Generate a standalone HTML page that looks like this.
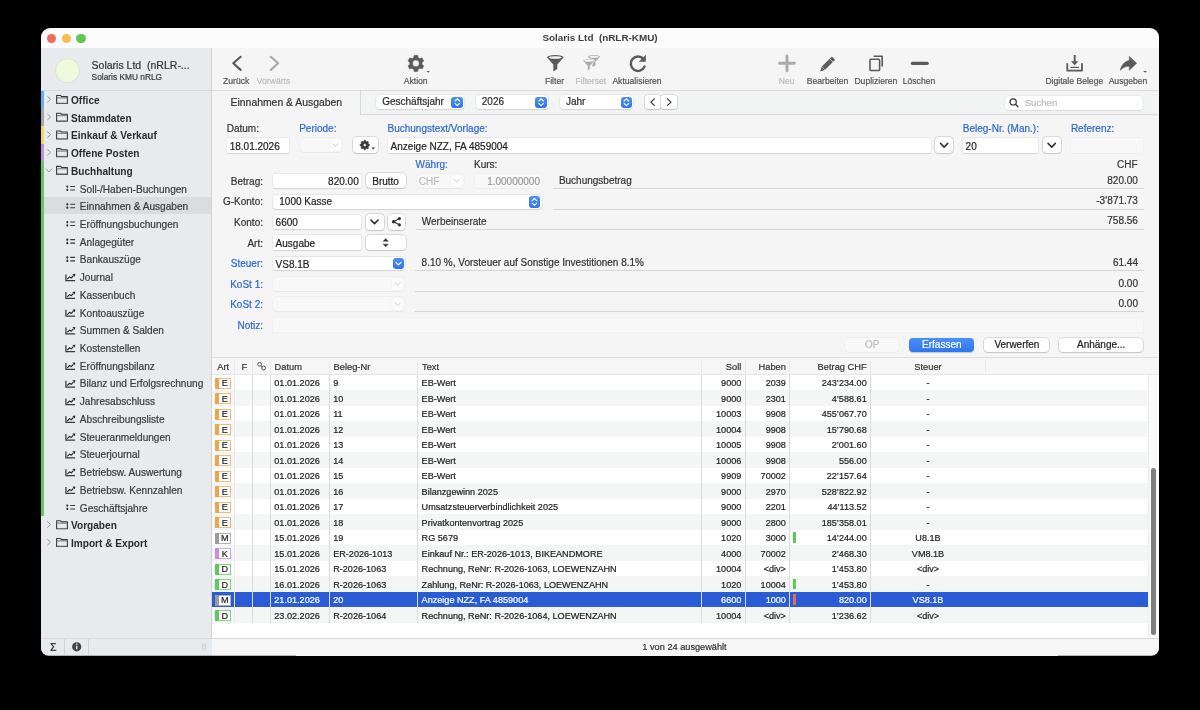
<!DOCTYPE html>
<html><head><meta charset="utf-8"><style>
*{box-sizing:border-box;margin:0;padding:0}
html,body{width:1200px;height:710px;background:#000;overflow:hidden}
body{font-family:"Liberation Sans",sans-serif;color:#2a2a2a;position:relative}
#win{position:absolute;left:0;top:0;width:1200px;height:710px;will-change:transform;clip-path:inset(28px 41px 54.3px 41px round 9px 9px 7.5px 7.5px);background:#f5f5f5}
.a{position:absolute;white-space:pre;-webkit-text-stroke:0.2px currentColor}
.b{position:absolute}
svg.i{position:absolute;left:0;top:0;overflow:visible}
</style></head><body><div id="win">
<div class="b" style="left:41.00px;top:28.00px;width:1118.00px;height:20.00px;background:#fcfcfc"></div>
<div class="b" style="left:41.00px;top:47.80px;width:1118.00px;height:0.80px;background:#e6e6e6"></div>
<div class="a" style="top:32.13px;font-size:9.9px;line-height:11.88px;color:#3d3d3d;font-weight:bold;-webkit-text-stroke:0;left:300.00px;width:600px;text-align:center;">Solaris Ltd  (nRLR-KMU)</div>
<div class="b" style="left:46.70px;top:33.60px;width:9.60px;height:9.60px;background:#ee6a5f;border-radius:50%"></div>
<div class="b" style="left:61.50px;top:33.60px;width:9.60px;height:9.60px;background:#f5bf4f;border-radius:50%"></div>
<div class="b" style="left:76.20px;top:33.60px;width:9.60px;height:9.60px;background:#62c554;border-radius:50%"></div>
<div class="b" style="left:41.00px;top:48.00px;width:170.50px;height:608.00px;background:#e8ebee"></div>
<div class="b" style="left:41.00px;top:89.60px;width:170.50px;height:1.00px;background:#d5d8db"></div>
<div class="b" style="left:211.00px;top:48.00px;width:1.00px;height:607.00px;background:#d3d3d3"></div>
<div class="b" style="left:56.40px;top:58.50px;width:23.00px;height:23.00px;background:#eefadc;border-radius:50%;box-shadow:0 0 0 0.8px #d8dfcf"></div>
<div class="a" style="top:58.66px;font-size:10.5px;line-height:12.60px;color:#333;left:91.60px;">Solaris Ltd  (nRLR-...</div>
<div class="a" style="top:71.90px;font-size:8.35px;line-height:10.02px;color:#3a3a3a;left:91.60px;">Solaris KMU nRLG</div>
<div class="b" style="left:44.00px;top:197.22px;width:167.00px;height:16.92px;background:#dadcdf"></div>
<div class="b" style="left:41.00px;top:90.50px;width:3.00px;height:17.72px;background:#5eb2f4"></div>
<div class="b" style="left:41.00px;top:108.22px;width:3.00px;height:17.72px;background:#a6a6a6"></div>
<div class="b" style="left:41.00px;top:125.94px;width:3.00px;height:17.72px;background:#f6d75c"></div>
<div class="b" style="left:41.00px;top:143.66px;width:3.00px;height:17.72px;background:#c48fe2"></div>
<div class="b" style="left:41.00px;top:161.38px;width:3.00px;height:354.40px;background:#60cb5c"></div>
<div class="a" style="top:94.94px;font-size:10.1px;line-height:12.12px;color:#2b2b2b;font-weight:bold;-webkit-text-stroke:0;left:71.00px;">Office</div>
<div class="a" style="top:112.66px;font-size:10.1px;line-height:12.12px;color:#2b2b2b;font-weight:bold;-webkit-text-stroke:0;left:71.00px;">Stammdaten</div>
<div class="a" style="top:130.38px;font-size:10.1px;line-height:12.12px;color:#2b2b2b;font-weight:bold;-webkit-text-stroke:0;left:71.00px;">Einkauf &amp; Verkauf</div>
<div class="a" style="top:148.10px;font-size:10.1px;line-height:12.12px;color:#2b2b2b;font-weight:bold;-webkit-text-stroke:0;left:71.00px;">Offene Posten</div>
<div class="a" style="top:165.82px;font-size:10.1px;line-height:12.12px;color:#2b2b2b;font-weight:bold;-webkit-text-stroke:0;left:71.00px;">Buchhaltung</div>
<div class="a" style="top:183.54px;font-size:10.1px;line-height:12.12px;color:#3a3a3a;left:79.80px;">Soll-/Haben-Buchungen</div>
<div class="a" style="top:201.26px;font-size:10.1px;line-height:12.12px;color:#3a3a3a;left:79.80px;">Einnahmen &amp; Ausgaben</div>
<div class="a" style="top:218.98px;font-size:10.1px;line-height:12.12px;color:#3a3a3a;left:79.80px;">Eröffnungsbuchungen</div>
<div class="a" style="top:236.70px;font-size:10.1px;line-height:12.12px;color:#3a3a3a;left:79.80px;">Anlagegüter</div>
<div class="a" style="top:254.42px;font-size:10.1px;line-height:12.12px;color:#3a3a3a;left:79.80px;">Bankauszüge</div>
<div class="a" style="top:272.14px;font-size:10.1px;line-height:12.12px;color:#3a3a3a;left:79.80px;">Journal</div>
<div class="a" style="top:289.86px;font-size:10.1px;line-height:12.12px;color:#3a3a3a;left:79.80px;">Kassenbuch</div>
<div class="a" style="top:307.58px;font-size:10.1px;line-height:12.12px;color:#3a3a3a;left:79.80px;">Kontoauszüge</div>
<div class="a" style="top:325.30px;font-size:10.1px;line-height:12.12px;color:#3a3a3a;left:79.80px;">Summen &amp; Salden</div>
<div class="a" style="top:343.02px;font-size:10.1px;line-height:12.12px;color:#3a3a3a;left:79.80px;">Kostenstellen</div>
<div class="a" style="top:360.74px;font-size:10.1px;line-height:12.12px;color:#3a3a3a;left:79.80px;">Eröffnungsbilanz</div>
<div class="a" style="top:378.46px;font-size:10.1px;line-height:12.12px;color:#3a3a3a;left:79.80px;">Bilanz und Erfolgsrechnung</div>
<div class="a" style="top:396.18px;font-size:10.1px;line-height:12.12px;color:#3a3a3a;left:79.80px;">Jahresabschluss</div>
<div class="a" style="top:413.90px;font-size:10.1px;line-height:12.12px;color:#3a3a3a;left:79.80px;">Abschreibungsliste</div>
<div class="a" style="top:431.62px;font-size:10.1px;line-height:12.12px;color:#3a3a3a;left:79.80px;">Steueranmeldungen</div>
<div class="a" style="top:449.34px;font-size:10.1px;line-height:12.12px;color:#3a3a3a;left:79.80px;">Steuerjournal</div>
<div class="a" style="top:467.06px;font-size:10.1px;line-height:12.12px;color:#3a3a3a;left:79.80px;">Betriebsw. Auswertung</div>
<div class="a" style="top:484.78px;font-size:10.1px;line-height:12.12px;color:#3a3a3a;left:79.80px;">Betriebsw. Kennzahlen</div>
<div class="a" style="top:502.50px;font-size:10.1px;line-height:12.12px;color:#3a3a3a;left:79.80px;">Geschäftsjahre</div>
<div class="a" style="top:520.22px;font-size:10.1px;line-height:12.12px;color:#2b2b2b;font-weight:bold;-webkit-text-stroke:0;left:71.00px;">Vorgaben</div>
<div class="a" style="top:537.94px;font-size:10.1px;line-height:12.12px;color:#2b2b2b;font-weight:bold;-webkit-text-stroke:0;left:71.00px;">Import &amp; Export</div>
<svg class="i" width="1200" height="710"><g transform="translate(56,94.90)"><path d="M0.6,8.6V0.6H4.6L5.6,1.7H11.4V8.6Z" fill="none" stroke="#3a3a3a" stroke-width="1.1" stroke-linejoin="round"/><path d="M0.8,3.0H11.2" stroke="#7a7a7a" stroke-width="1.1"/><path d="M0.8,8.3H11.2" stroke="#777" stroke-width="0.8"/></g><path d="M47.6,96.40L50.6,99.20L47.6,102.00" fill="none" stroke="#9a9a9a" stroke-width="1" stroke-linecap="round" stroke-linejoin="round"/><g transform="translate(56,112.62)"><path d="M0.6,8.6V0.6H4.6L5.6,1.7H11.4V8.6Z" fill="none" stroke="#3a3a3a" stroke-width="1.1" stroke-linejoin="round"/><path d="M0.8,3.0H11.2" stroke="#7a7a7a" stroke-width="1.1"/><path d="M0.8,8.3H11.2" stroke="#777" stroke-width="0.8"/></g><path d="M47.6,114.12L50.6,116.92L47.6,119.72" fill="none" stroke="#9a9a9a" stroke-width="1" stroke-linecap="round" stroke-linejoin="round"/><g transform="translate(56,130.34)"><path d="M0.6,8.6V0.6H4.6L5.6,1.7H11.4V8.6Z" fill="none" stroke="#3a3a3a" stroke-width="1.1" stroke-linejoin="round"/><path d="M0.8,3.0H11.2" stroke="#7a7a7a" stroke-width="1.1"/><path d="M0.8,8.3H11.2" stroke="#777" stroke-width="0.8"/></g><path d="M47.6,131.84L50.6,134.64L47.6,137.44" fill="none" stroke="#9a9a9a" stroke-width="1" stroke-linecap="round" stroke-linejoin="round"/><g transform="translate(56,148.06)"><path d="M0.6,8.6V0.6H4.6L5.6,1.7H11.4V8.6Z" fill="none" stroke="#3a3a3a" stroke-width="1.1" stroke-linejoin="round"/><path d="M0.8,3.0H11.2" stroke="#7a7a7a" stroke-width="1.1"/><path d="M0.8,8.3H11.2" stroke="#777" stroke-width="0.8"/></g><path d="M47.6,149.56L50.6,152.36L47.6,155.16" fill="none" stroke="#9a9a9a" stroke-width="1" stroke-linecap="round" stroke-linejoin="round"/><g transform="translate(56,165.78)"><path d="M0.6,8.6V0.6H4.6L5.6,1.7H11.4V8.6Z" fill="none" stroke="#3a3a3a" stroke-width="1.1" stroke-linejoin="round"/><path d="M0.8,3.0H11.2" stroke="#7a7a7a" stroke-width="1.1"/><path d="M0.8,8.3H11.2" stroke="#777" stroke-width="0.8"/></g><path d="M46.2,168.98L49,171.98L51.8,168.98" fill="none" stroke="#9a9a9a" stroke-width="1" stroke-linecap="round" stroke-linejoin="round"/><g fill="#222"><circle cx="67.3" cy="186.50" r="1.05"/><circle cx="67.3" cy="190.00" r="1.05"/></g><path d="M67.3,186.50V190.00" stroke="#555" stroke-width="0.5"/><path d="M70.2,186.50H75.1M70.2,190.00H75.1" stroke="#3a3a3a" stroke-width="1.1"/><g fill="#222"><circle cx="67.3" cy="204.22" r="1.05"/><circle cx="67.3" cy="207.72" r="1.05"/></g><path d="M67.3,204.22V207.72" stroke="#555" stroke-width="0.5"/><path d="M70.2,204.22H75.1M70.2,207.72H75.1" stroke="#3a3a3a" stroke-width="1.1"/><g fill="#222"><circle cx="67.3" cy="221.94" r="1.05"/><circle cx="67.3" cy="225.44" r="1.05"/></g><path d="M67.3,221.94V225.44" stroke="#555" stroke-width="0.5"/><path d="M70.2,221.94H75.1M70.2,225.44H75.1" stroke="#3a3a3a" stroke-width="1.1"/><g fill="#222"><circle cx="67.3" cy="239.66" r="1.05"/><circle cx="67.3" cy="243.16" r="1.05"/></g><path d="M67.3,239.66V243.16" stroke="#555" stroke-width="0.5"/><path d="M70.2,239.66H75.1M70.2,243.16H75.1" stroke="#3a3a3a" stroke-width="1.1"/><g fill="#222"><circle cx="67.3" cy="257.38" r="1.05"/><circle cx="67.3" cy="260.88" r="1.05"/></g><path d="M67.3,257.38V260.88" stroke="#555" stroke-width="0.5"/><path d="M70.2,257.38H75.1M70.2,260.88H75.1" stroke="#3a3a3a" stroke-width="1.1"/><path d="M65.9,274.40V280.70H75.1" fill="none" stroke="#3a3a3a" stroke-width="1.25"/><path d="M67.2,279.20L69.6,276.90L71.3,278.00L73.4,275.70" fill="none" stroke="#2a2a2a" stroke-width="1.15" stroke-linejoin="round"/><path d="M72.4,274.20L75.3,273.80L74.9,276.70Z" fill="#222"/><path d="M65.9,292.12V298.42H75.1" fill="none" stroke="#3a3a3a" stroke-width="1.25"/><path d="M67.2,296.92L69.6,294.62L71.3,295.72L73.4,293.42" fill="none" stroke="#2a2a2a" stroke-width="1.15" stroke-linejoin="round"/><path d="M72.4,291.92L75.3,291.52L74.9,294.42Z" fill="#222"/><path d="M65.9,309.84V316.14H75.1" fill="none" stroke="#3a3a3a" stroke-width="1.25"/><path d="M67.2,314.64L69.6,312.34L71.3,313.44L73.4,311.14" fill="none" stroke="#2a2a2a" stroke-width="1.15" stroke-linejoin="round"/><path d="M72.4,309.64L75.3,309.24L74.9,312.14Z" fill="#222"/><path d="M65.9,327.56V333.86H75.1" fill="none" stroke="#3a3a3a" stroke-width="1.25"/><path d="M67.2,332.36L69.6,330.06L71.3,331.16L73.4,328.86" fill="none" stroke="#2a2a2a" stroke-width="1.15" stroke-linejoin="round"/><path d="M72.4,327.36L75.3,326.96L74.9,329.86Z" fill="#222"/><path d="M65.9,345.28V351.58H75.1" fill="none" stroke="#3a3a3a" stroke-width="1.25"/><path d="M67.2,350.08L69.6,347.78L71.3,348.88L73.4,346.58" fill="none" stroke="#2a2a2a" stroke-width="1.15" stroke-linejoin="round"/><path d="M72.4,345.08L75.3,344.68L74.9,347.58Z" fill="#222"/><path d="M65.9,363.00V369.30H75.1" fill="none" stroke="#3a3a3a" stroke-width="1.25"/><path d="M67.2,367.80L69.6,365.50L71.3,366.60L73.4,364.30" fill="none" stroke="#2a2a2a" stroke-width="1.15" stroke-linejoin="round"/><path d="M72.4,362.80L75.3,362.40L74.9,365.30Z" fill="#222"/><path d="M65.9,380.72V387.02H75.1" fill="none" stroke="#3a3a3a" stroke-width="1.25"/><path d="M67.2,385.52L69.6,383.22L71.3,384.32L73.4,382.02" fill="none" stroke="#2a2a2a" stroke-width="1.15" stroke-linejoin="round"/><path d="M72.4,380.52L75.3,380.12L74.9,383.02Z" fill="#222"/><path d="M65.9,398.44V404.74H75.1" fill="none" stroke="#3a3a3a" stroke-width="1.25"/><path d="M67.2,403.24L69.6,400.94L71.3,402.04L73.4,399.74" fill="none" stroke="#2a2a2a" stroke-width="1.15" stroke-linejoin="round"/><path d="M72.4,398.24L75.3,397.84L74.9,400.74Z" fill="#222"/><path d="M65.9,416.16V422.46H75.1" fill="none" stroke="#3a3a3a" stroke-width="1.25"/><path d="M67.2,420.96L69.6,418.66L71.3,419.76L73.4,417.46" fill="none" stroke="#2a2a2a" stroke-width="1.15" stroke-linejoin="round"/><path d="M72.4,415.96L75.3,415.56L74.9,418.46Z" fill="#222"/><path d="M65.9,433.88V440.18H75.1" fill="none" stroke="#3a3a3a" stroke-width="1.25"/><path d="M67.2,438.68L69.6,436.38L71.3,437.48L73.4,435.18" fill="none" stroke="#2a2a2a" stroke-width="1.15" stroke-linejoin="round"/><path d="M72.4,433.68L75.3,433.28L74.9,436.18Z" fill="#222"/><path d="M65.9,451.60V457.90H75.1" fill="none" stroke="#3a3a3a" stroke-width="1.25"/><path d="M67.2,456.40L69.6,454.10L71.3,455.20L73.4,452.90" fill="none" stroke="#2a2a2a" stroke-width="1.15" stroke-linejoin="round"/><path d="M72.4,451.40L75.3,451.00L74.9,453.90Z" fill="#222"/><path d="M65.9,469.32V475.62H75.1" fill="none" stroke="#3a3a3a" stroke-width="1.25"/><path d="M67.2,474.12L69.6,471.82L71.3,472.92L73.4,470.62" fill="none" stroke="#2a2a2a" stroke-width="1.15" stroke-linejoin="round"/><path d="M72.4,469.12L75.3,468.72L74.9,471.62Z" fill="#222"/><path d="M65.9,487.04V493.34H75.1" fill="none" stroke="#3a3a3a" stroke-width="1.25"/><path d="M67.2,491.84L69.6,489.54L71.3,490.64L73.4,488.34" fill="none" stroke="#2a2a2a" stroke-width="1.15" stroke-linejoin="round"/><path d="M72.4,486.84L75.3,486.44L74.9,489.34Z" fill="#222"/><g fill="#222"><circle cx="67.3" cy="505.46" r="1.05"/><circle cx="67.3" cy="508.96" r="1.05"/></g><path d="M67.3,505.46V508.96" stroke="#555" stroke-width="0.5"/><path d="M70.2,505.46H75.1M70.2,508.96H75.1" stroke="#3a3a3a" stroke-width="1.1"/><g transform="translate(56,520.18)"><path d="M0.6,8.6V0.6H4.6L5.6,1.7H11.4V8.6Z" fill="none" stroke="#3a3a3a" stroke-width="1.1" stroke-linejoin="round"/><path d="M0.8,3.0H11.2" stroke="#7a7a7a" stroke-width="1.1"/><path d="M0.8,8.3H11.2" stroke="#777" stroke-width="0.8"/></g><path d="M47.6,521.68L50.6,524.48L47.6,527.28" fill="none" stroke="#9a9a9a" stroke-width="1" stroke-linecap="round" stroke-linejoin="round"/><g transform="translate(56,537.90)"><path d="M0.6,8.6V0.6H4.6L5.6,1.7H11.4V8.6Z" fill="none" stroke="#3a3a3a" stroke-width="1.1" stroke-linejoin="round"/><path d="M0.8,3.0H11.2" stroke="#7a7a7a" stroke-width="1.1"/><path d="M0.8,8.3H11.2" stroke="#777" stroke-width="0.8"/></g><path d="M47.6,539.40L50.6,542.20L47.6,545.00" fill="none" stroke="#9a9a9a" stroke-width="1" stroke-linecap="round" stroke-linejoin="round"/></svg>
<div class="b" style="left:41.00px;top:638.00px;width:170.50px;height:18.00px;background:#e8ebee"></div>
<div class="b" style="left:41.00px;top:638.00px;width:170.50px;height:1.00px;background:#d6d8da"></div>
<div class="b" style="left:64.20px;top:639.00px;width:0.80px;height:16.00px;background:#d0d2d4"></div>
<div class="b" style="left:88.00px;top:639.00px;width:0.80px;height:16.00px;background:#d0d2d4"></div>
<div class="a" style="top:640.89px;font-size:11px;line-height:13.20px;color:#444;font-weight:bold;-webkit-text-stroke:0;left:-246.80px;width:600px;text-align:center;">Σ</div>
<svg class="i" width="1200" height="710"><circle cx="76.7" cy="646.8" r="4.6" fill="#444"/><rect x="76" y="645.6" width="1.4" height="3.6" fill="#e8ebee"/><circle cx="76.7" cy="644.0" r="0.8" fill="#e8ebee"/><path d="M202.6,643.5V650.5M204.1,643.5V650.5M205.6,643.5V650.5" stroke="#c4c6c8" stroke-width="0.6"/></svg>
<div class="b" style="left:212.00px;top:48.00px;width:947.00px;height:42.00px;background:#f5f5f5"></div>
<div class="b" style="left:212.00px;top:89.60px;width:947.00px;height:1.00px;background:#dcdcdc"></div>
<svg class="i" width="1200" height="710"><path d="M240.6,56.8L233.3,63.3L240.6,69.9" fill="none" stroke="#5a5a5a" stroke-width="2.2" stroke-linecap="round" stroke-linejoin="round"/><path d="M270.8,56.8L278.1,63.3L270.8,69.9" fill="none" stroke="#ababab" stroke-width="2.2" stroke-linecap="round" stroke-linejoin="round"/><path d="M413.56,57.66L414.11,55.29L417.69,55.29L418.24,57.66A6.2,6.2 0 0 1 419.70,58.50L419.70,58.50L422.03,57.80L423.81,60.89L422.04,62.56A6.2,6.2 0 0 1 422.04,64.24L422.04,64.24L423.81,65.91L422.03,69.00L419.70,68.30A6.2,6.2 0 0 1 418.24,69.14L418.24,69.14L417.69,71.51L414.11,71.51L413.56,69.14A6.2,6.2 0 0 1 412.10,68.30L412.10,68.30L409.77,69.00L407.99,65.91L409.76,64.24A6.2,6.2 0 0 1 409.76,62.56L409.76,62.56L407.99,60.89L409.77,57.80L412.10,58.50A6.2,6.2 0 0 1 413.56,57.66ZM419.20,63.40A3.3,3.3 0 1 0 412.60,63.40A3.3,3.3 0 1 0 419.20,63.40Z" fill="#5a5a5a" fill-rule="evenodd" stroke="#5a5a5a" stroke-width="0.5" stroke-linejoin="round"/><path d="M426.6,70.9H429.9L428.25,72.7Z" fill="#5a5a5a"/><g transform="translate(547,55)"><path d="M0,2.6A8.3,2.6 0 0 1 16.6,2.6L10.3,9.4V14.1L6.3,16.6V9.4Z" fill="#5a5a5a"/><ellipse cx="8.3" cy="2.5" rx="6.5" ry="1.35" fill="#f5f5f5"/></g><g transform="translate(588,55) scale(0.72)"><path d="M0,2.6A8.3,2.6 0 0 1 16.6,2.6L10.3,9.4V14.1L6.3,16.6V9.4Z" fill="#ababab"/><ellipse cx="8.3" cy="2.5" rx="6.3" ry="1.4" fill="#f5f5f5"/></g><g transform="translate(582.8,59) scale(0.72)"><path d="M0,2.6A8.3,2.6 0 0 1 16.6,2.6L10.3,9.4V14.1L6.3,16.6V9.4Z" fill="#ababab" stroke="#f5f5f5" stroke-width="1.2"/><ellipse cx="8.3" cy="2.5" rx="6.3" ry="1.4" fill="#f5f5f5"/></g><path d="M643.6,59.2A7.2,7.2 0 1 0 644.6,66.6" fill="none" stroke="#5a5a5a" stroke-width="2.4" stroke-linecap="round"/><path d="M645.8,54.8V61.8H638.8Z" fill="#5a5a5a"/><path d="M779.6,63.3H794.4M787,55.9V70.7" stroke="#ababab" stroke-width="2.9" stroke-linecap="round"/><g transform="rotate(-45 828 63.6)"><rect x="821.6" y="61.3" width="14.2" height="4.6" rx="0.7" fill="#5a5a5a"/><path d="M821.4,61.3L816.9,63.6L821.4,65.9Z" fill="#5a5a5a"/><path d="M832.6,61.1V66.1" stroke="#f5f5f5" stroke-width="0.7"/></g><rect x="870" y="59.3" width="9.6" height="11.2" rx="0.8" fill="none" stroke="#5a5a5a" stroke-width="1.6"/><path d="M873.6,56.2H882.2V66.6" fill="none" stroke="#5a5a5a" stroke-width="1.6" stroke-linejoin="round"/><path d="M912.4,63.3H927.2" stroke="#5a5a5a" stroke-width="3.2" stroke-linecap="round"/><path d="M1067.3,63.2V70.6H1082V63.2" fill="none" stroke="#5a5a5a" stroke-width="1.8" stroke-linejoin="round"/><path d="M1070.4,67.4H1078.9" stroke="#5a5a5a" stroke-width="1.2"/><path d="M1074.7,55V61.8" stroke="#5a5a5a" stroke-width="1.9"/><path d="M1071,61.3H1078.4L1074.7,65.2Z" fill="#5a5a5a"/><path d="M1120.2,70.4C1121.6,65 1124.6,61.2 1129.3,60.6V56.3L1136.7,63.2L1129.3,70.3V66.2C1125.6,66.2 1122.6,67.8 1120.2,70.4Z" fill="#5a5a5a" stroke="#5a5a5a" stroke-width="0.5" stroke-linejoin="round"/><path d="M1143.2,70.9H1147L1145.1,72.8Z" fill="#5a5a5a"/></svg>
<div class="a" style="top:76.26px;font-size:8.6px;line-height:10.32px;color:#555;left:-63.80px;width:600px;text-align:center;">Zurück</div>
<div class="a" style="top:76.26px;font-size:8.6px;line-height:10.32px;color:#bcbcbc;left:-26.50px;width:600px;text-align:center;">Vorwärts</div>
<div class="a" style="top:76.26px;font-size:8.6px;line-height:10.32px;color:#555;left:115.70px;width:600px;text-align:center;">Aktion</div>
<div class="a" style="top:76.26px;font-size:8.6px;line-height:10.32px;color:#555;left:254.50px;width:600px;text-align:center;">Filter</div>
<div class="a" style="top:76.26px;font-size:8.6px;line-height:10.32px;color:#bcbcbc;left:290.90px;width:600px;text-align:center;">Filterset</div>
<div class="a" style="top:76.26px;font-size:8.6px;line-height:10.32px;color:#555;left:337.00px;width:600px;text-align:center;">Aktualisieren</div>
<div class="a" style="top:76.26px;font-size:8.6px;line-height:10.32px;color:#bcbcbc;left:486.60px;width:600px;text-align:center;">Neu</div>
<div class="a" style="top:76.26px;font-size:8.6px;line-height:10.32px;color:#555;left:527.60px;width:600px;text-align:center;">Bearbeiten</div>
<div class="a" style="top:76.26px;font-size:8.6px;line-height:10.32px;color:#555;left:575.90px;width:600px;text-align:center;">Duplizieren</div>
<div class="a" style="top:76.26px;font-size:8.6px;line-height:10.32px;color:#555;left:619.00px;width:600px;text-align:center;">Löschen</div>
<div class="a" style="top:76.26px;font-size:8.6px;line-height:10.32px;color:#555;left:774.30px;width:600px;text-align:center;">Digitale Belege</div>
<div class="a" style="top:76.26px;font-size:8.6px;line-height:10.32px;color:#555;left:828.00px;width:600px;text-align:center;">Ausgeben</div>
<div class="b" style="left:212.00px;top:90.60px;width:947.00px;height:23.40px;background:#f5f5f5"></div>
<div class="b" style="left:361.00px;top:90.60px;width:798.00px;height:23.00px;background:#f3f4f4"></div>
<div class="b" style="left:360.00px;top:90.60px;width:1.00px;height:23.90px;background:#d9d9d9"></div>
<div class="b" style="left:360.00px;top:113.60px;width:799.00px;height:1.00px;background:#d9d9d9"></div>
<div class="a" style="top:96.66px;font-size:10.4px;line-height:12.48px;color:#333;left:230.60px;">Einnahmen &amp; Ausgaben</div>
<div class="b" style="left:376.00px;top:95.00px;width:88.30px;height:14.30px;background:#fff;border-radius:4px;box-shadow:0 0 0 0.5px #dcdcdc,0 0.7px 1px rgba(0,0,0,0.16)"></div>
<div class="b" style="left:451.40px;top:96.50px;width:11.80px;height:11.40px;background:linear-gradient(#4d90f7,#2f74ee);border-radius:3px"></div>
<div class="a" style="top:96.03px;font-size:10px;line-height:12.00px;color:#2a2a2a;left:382.20px;">Geschäftsjahr</div>
<div class="b" style="left:476.00px;top:95.00px;width:72.10px;height:14.30px;background:#fff;border-radius:4px;box-shadow:0 0 0 0.5px #dcdcdc,0 0.7px 1px rgba(0,0,0,0.16)"></div>
<div class="b" style="left:535.20px;top:96.50px;width:11.80px;height:11.40px;background:linear-gradient(#4d90f7,#2f74ee);border-radius:3px"></div>
<div class="a" style="top:96.03px;font-size:10px;line-height:12.00px;color:#2a2a2a;left:481.80px;">2026</div>
<div class="b" style="left:559.70px;top:95.00px;width:73.70px;height:14.30px;background:#fff;border-radius:4px;box-shadow:0 0 0 0.5px #dcdcdc,0 0.7px 1px rgba(0,0,0,0.16)"></div>
<div class="b" style="left:620.50px;top:96.50px;width:11.80px;height:11.40px;background:linear-gradient(#4d90f7,#2f74ee);border-radius:3px"></div>
<div class="a" style="top:96.03px;font-size:10px;line-height:12.00px;color:#2a2a2a;left:566.00px;">Jahr</div>
<div class="b" style="left:644.70px;top:95.00px;width:15.90px;height:14.30px;background:#fff;border-radius:3px;box-shadow:0 0 0 0.6px #c4c4c4,0 0.7px 0.9px rgba(0,0,0,0.18)"></div>
<div class="b" style="left:661.20px;top:95.00px;width:16.10px;height:14.30px;background:#fff;border-radius:3px;box-shadow:0 0 0 0.6px #c4c4c4,0 0.7px 0.9px rgba(0,0,0,0.18)"></div>
<div class="b" style="left:1004.80px;top:95.50px;width:138.40px;height:14.70px;background:#fff;border-radius:4px;box-shadow:0 0 0 0.5px #e2e2e2,0 0.6px 0.9px rgba(0,0,0,0.12)"></div>
<div class="a" style="top:97.11px;font-size:9.6px;line-height:11.52px;color:#b9b9b9;left:1024.70px;">Suchen</div>
<div class="a" style="top:123.23px;font-size:10px;line-height:12.00px;color:#333;left:226.70px;">Datum:</div>
<div class="a" style="top:123.23px;font-size:10px;line-height:12.00px;color:#2c68d9;left:299.20px;">Periode:</div>
<div class="a" style="top:123.23px;font-size:10px;line-height:12.00px;color:#2c68d9;left:387.50px;">Buchungstext/Vorlage:</div>
<div class="a" style="top:123.23px;font-size:10px;line-height:12.00px;color:#2c68d9;left:962.80px;">Beleg-Nr. (Man.):</div>
<div class="a" style="top:123.23px;font-size:10px;line-height:12.00px;color:#2c68d9;left:1070.90px;">Referenz:</div>
<div class="b" style="left:226.90px;top:137.80px;width:62.30px;height:14.80px;background:#fff;border-radius:1.5px;box-shadow:0 0 0 0.5px #e0e0e0,0 0.6px 0.8px rgba(0,0,0,0.16)"></div>
<div class="a" style="top:140.73px;font-size:10px;line-height:12.00px;color:#222;left:229.70px;">18.01.2026</div>
<div class="b" style="left:299.60px;top:138.30px;width:42.70px;height:13.70px;background:#f8f8f8;border-radius:4px;box-shadow:0 0 0 0.5px #ececec,0 0.6px 0.8px rgba(0,0,0,0.07)"></div>
<div class="b" style="left:329.90px;top:139.30px;width:11.00px;height:11.70px;background:#fbfbfb;border-radius:3px;box-shadow:0 0 0 0.5px #efefef"></div>
<div class="b" style="left:352.80px;top:137.40px;width:25.10px;height:15.60px;background:#fff;border-radius:4px;box-shadow:0 0 0 0.6px #c4c4c4,0 0.7px 0.9px rgba(0,0,0,0.18)"></div>
<div class="b" style="left:388.00px;top:137.80px;width:542.90px;height:14.80px;background:#fff;border-radius:1.5px;box-shadow:0 0 0 0.5px #e0e0e0,0 0.6px 0.8px rgba(0,0,0,0.16)"></div>
<div class="a" style="top:140.73px;font-size:10px;line-height:12.00px;color:#222;left:390.60px;">Anzeige NZZ, FA 4859004</div>
<div class="b" style="left:934.80px;top:137.40px;width:18.70px;height:15.60px;background:#fff;border-radius:3.5px;box-shadow:0 0 0 0.6px #c4c4c4,0 0.7px 0.9px rgba(0,0,0,0.18)"></div>
<div class="b" style="left:962.80px;top:137.80px;width:75.40px;height:14.80px;background:#fff;border-radius:1.5px;box-shadow:0 0 0 0.5px #e0e0e0,0 0.6px 0.8px rgba(0,0,0,0.16)"></div>
<div class="a" style="top:140.73px;font-size:10px;line-height:12.00px;color:#222;left:965.60px;">20</div>
<div class="b" style="left:1042.60px;top:137.40px;width:18.20px;height:15.60px;background:#fff;border-radius:3.5px;box-shadow:0 0 0 0.6px #c4c4c4,0 0.7px 0.9px rgba(0,0,0,0.18)"></div>
<div class="b" style="left:1070.90px;top:138.00px;width:72.30px;height:14.60px;background:#f8f8f8;border-radius:2px;box-shadow:0 0 0 0.5px #ebebeb,0 0.5px 0.6px rgba(0,0,0,0.06)"></div>
<div class="a" style="top:159.03px;font-size:10px;line-height:12.00px;color:#2c68d9;left:415.60px;">Währg:</div>
<div class="a" style="top:159.03px;font-size:10px;line-height:12.00px;color:#333;left:474.00px;">Kurs:</div>
<div class="a" style="top:158.94px;font-size:10px;line-height:12.00px;color:#333;right:62.40px;text-align:right;">CHF</div>
<div class="a" style="top:176.03px;font-size:10px;line-height:12.00px;color:#333;right:937.00px;text-align:right;">Betrag:</div>
<div class="b" style="left:272.70px;top:174.00px;width:88.30px;height:14.20px;background:#fff;border-radius:1.5px;box-shadow:0 0 0 0.5px #e0e0e0,0 0.6px 0.8px rgba(0,0,0,0.16)"></div>
<div class="a" style="top:176.03px;font-size:10px;line-height:12.00px;color:#222;right:841.30px;text-align:right;">820.00</div>
<div class="b" style="left:365.50px;top:172.60px;width:40.30px;height:15.90px;background:#fff;border-radius:4px;box-shadow:0 0 0 0.6px #c4c4c4,0 0.7px 0.9px rgba(0,0,0,0.18)"></div>
<div class="a" style="top:175.53px;font-size:10px;line-height:12.00px;color:#222;left:85.60px;width:600px;text-align:center;">Brutto</div>
<div class="b" style="left:416.50px;top:173.50px;width:47.00px;height:14.10px;background:#f8f8f8;border-radius:4px;box-shadow:0 0 0 0.5px #ececec,0 0.6px 0.8px rgba(0,0,0,0.07)"></div>
<div class="b" style="left:451.10px;top:174.50px;width:11.00px;height:12.10px;background:#fbfbfb;border-radius:3px;box-shadow:0 0 0 0.5px #efefef"></div>
<div class="a" style="top:175.84px;font-size:10px;line-height:12.00px;color:#bdbdbd;left:418.80px;">CHF</div>
<div class="b" style="left:475.40px;top:174.00px;width:67.10px;height:14.20px;background:#f8f8f8;border-radius:2px;box-shadow:0 0 0 0.5px #ebebeb,0 0.5px 0.6px rgba(0,0,0,0.06)"></div>
<div class="a" style="top:175.84px;font-size:10px;line-height:12.00px;color:#9a9a9a;right:660.00px;text-align:right;">1.00000000</div>
<div class="a" style="top:174.84px;font-size:10px;line-height:12.00px;color:#333;left:558.90px;">Buchungsbetrag</div>
<div class="b" style="left:552.50px;top:188.00px;width:591.20px;height:1.00px;background:#d5d5d5"></div>
<div class="a" style="top:174.84px;font-size:10px;line-height:12.00px;color:#333;right:62.10px;text-align:right;">820.00</div>
<div class="a" style="top:196.03px;font-size:10px;line-height:12.00px;color:#333;right:937.00px;text-align:right;">G-Konto:</div>
<div class="b" style="left:272.70px;top:194.60px;width:269.80px;height:14.60px;background:#fff;border-radius:4px;box-shadow:0 0 0 0.5px #dcdcdc,0 0.7px 1px rgba(0,0,0,0.16)"></div>
<div class="b" style="left:528.50px;top:196.20px;width:11.90px;height:11.40px;background:linear-gradient(#4d90f7,#2f74ee);border-radius:3px"></div>
<div class="a" style="top:195.94px;font-size:10px;line-height:12.00px;color:#222;left:279.30px;">1000 Kasse</div>
<div class="b" style="left:552.50px;top:208.60px;width:591.20px;height:1.00px;background:#d5d5d5"></div>
<div class="a" style="top:195.13px;font-size:10px;line-height:12.00px;color:#333;right:62.10px;text-align:right;">-3’871.73</div>
<div class="a" style="top:216.73px;font-size:10px;line-height:12.00px;color:#333;right:937.00px;text-align:right;">Konto:</div>
<div class="b" style="left:272.70px;top:214.90px;width:88.30px;height:14.40px;background:#fff;border-radius:1.5px;box-shadow:0 0 0 0.5px #e0e0e0,0 0.6px 0.8px rgba(0,0,0,0.16)"></div>
<div class="a" style="top:217.03px;font-size:10px;line-height:12.00px;color:#222;left:275.60px;">6600</div>
<div class="b" style="left:365.50px;top:214.00px;width:18.00px;height:15.50px;background:#fff;border-radius:3.5px;box-shadow:0 0 0 0.6px #c4c4c4,0 0.7px 0.9px rgba(0,0,0,0.18)"></div>
<div class="b" style="left:387.80px;top:214.00px;width:17.70px;height:15.50px;background:#fff;border-radius:4px;box-shadow:0 0 0 0.6px #c4c4c4,0 0.7px 0.9px rgba(0,0,0,0.18)"></div>
<div class="a" style="top:215.73px;font-size:10px;line-height:12.00px;color:#333;left:421.80px;">Werbeinserate</div>
<div class="b" style="left:415.50px;top:229.00px;width:728.20px;height:1.00px;background:#d5d5d5"></div>
<div class="a" style="top:215.23px;font-size:10px;line-height:12.00px;color:#333;right:62.10px;text-align:right;">758.56</div>
<div class="a" style="top:237.73px;font-size:10px;line-height:12.00px;color:#333;right:937.00px;text-align:right;">Art:</div>
<div class="b" style="left:272.90px;top:235.40px;width:88.10px;height:14.90px;background:#fff;border-radius:1.5px;box-shadow:0 0 0 0.5px #e0e0e0,0 0.6px 0.8px rgba(0,0,0,0.16)"></div>
<div class="a" style="top:238.03px;font-size:10px;line-height:12.00px;color:#222;left:275.60px;">Ausgabe</div>
<div class="b" style="left:365.60px;top:234.80px;width:40.20px;height:15.50px;background:#fff;border-radius:4px;box-shadow:0 0 0 0.6px #c4c4c4,0 0.7px 0.9px rgba(0,0,0,0.18)"></div>
<div class="a" style="top:257.74px;font-size:10px;line-height:12.00px;color:#2c68d9;right:937.00px;text-align:right;">Steuer:</div>
<div class="b" style="left:272.90px;top:256.60px;width:131.90px;height:13.70px;background:#fff;border-radius:4px;box-shadow:0 0 0 0.5px #dcdcdc,0 0.7px 1px rgba(0,0,0,0.16)"></div>
<div class="b" style="left:392.70px;top:257.60px;width:11.50px;height:11.60px;background:linear-gradient(#4d90f7,#2f74ee);border-radius:3px"></div>
<div class="a" style="top:258.54px;font-size:10px;line-height:12.00px;color:#222;left:275.60px;">VS8.1B</div>
<div class="a" style="top:257.04px;font-size:10px;line-height:12.00px;color:#333;left:421.60px;">8.10 %, Vorsteuer auf Sonstige Investitionen 8.1%</div>
<div class="b" style="left:415.20px;top:270.20px;width:728.50px;height:1.00px;background:#d5d5d5"></div>
<div class="a" style="top:257.04px;font-size:10px;line-height:12.00px;color:#333;right:62.00px;text-align:right;">61.44</div>
<div class="a" style="top:278.84px;font-size:10px;line-height:12.00px;color:#2c68d9;right:937.00px;text-align:right;">KoSt 1:</div>
<div class="b" style="left:272.90px;top:277.00px;width:131.90px;height:13.50px;background:#f8f8f8;border-radius:4px;box-shadow:0 0 0 0.5px #ececec,0 0.6px 0.8px rgba(0,0,0,0.07)"></div>
<div class="b" style="left:392.40px;top:278.00px;width:11.00px;height:11.50px;background:#fbfbfb;border-radius:3px;box-shadow:0 0 0 0.5px #efefef"></div>
<div class="b" style="left:415.20px;top:290.50px;width:728.50px;height:1.00px;background:#d5d5d5"></div>
<div class="a" style="top:277.94px;font-size:10px;line-height:12.00px;color:#333;right:62.00px;text-align:right;">0.00</div>
<div class="a" style="top:299.04px;font-size:10px;line-height:12.00px;color:#2c68d9;right:937.00px;text-align:right;">KoSt 2:</div>
<div class="b" style="left:272.90px;top:297.40px;width:131.90px;height:13.60px;background:#f8f8f8;border-radius:4px;box-shadow:0 0 0 0.5px #ececec,0 0.6px 0.8px rgba(0,0,0,0.07)"></div>
<div class="b" style="left:392.40px;top:298.40px;width:11.00px;height:11.60px;background:#fbfbfb;border-radius:3px;box-shadow:0 0 0 0.5px #efefef"></div>
<div class="b" style="left:415.20px;top:311.40px;width:728.50px;height:1.00px;background:#d5d5d5"></div>
<div class="a" style="top:298.04px;font-size:10px;line-height:12.00px;color:#333;right:62.00px;text-align:right;">0.00</div>
<div class="a" style="top:319.84px;font-size:10px;line-height:12.00px;color:#2c68d9;right:937.00px;text-align:right;">Notiz:</div>
<div class="b" style="left:272.90px;top:318.00px;width:870.30px;height:14.20px;background:#f8f8f8;box-shadow:0 0 0 0.5px #ededed"></div>
<div class="b" style="left:845.00px;top:337.80px;width:54.30px;height:14.20px;background:#f9f9f9;border-radius:4px;box-shadow:0 0 0 0.5px #e6e6e6,0 0.5px 0.6px rgba(0,0,0,0.06)"></div>
<div class="a" style="top:339.04px;font-size:10px;line-height:12.00px;color:#bdbdbd;left:572.20px;width:600px;text-align:center;">OP</div>
<div class="b" style="left:909.20px;top:337.80px;width:65.20px;height:14.20px;background:linear-gradient(#4b8ff8,#2f75ee);border-radius:4px;box-shadow:0 0.5px 1px rgba(0,0,0,0.2)"></div>
<div class="a" style="top:339.04px;font-size:10px;line-height:12.00px;color:#fff;left:641.80px;width:600px;text-align:center;">Erfassen</div>
<div class="b" style="left:984.30px;top:337.80px;width:65.20px;height:14.20px;background:#fff;border-radius:4px;box-shadow:0 0 0 0.6px #c4c4c4,0 0.7px 0.9px rgba(0,0,0,0.18)"></div>
<div class="a" style="top:339.04px;font-size:10px;line-height:12.00px;color:#222;left:716.90px;width:600px;text-align:center;">Verwerfen</div>
<div class="b" style="left:1059.40px;top:337.80px;width:83.60px;height:14.20px;background:#fff;border-radius:4px;box-shadow:0 0 0 0.6px #c4c4c4,0 0.7px 0.9px rgba(0,0,0,0.18)"></div>
<div class="a" style="top:339.04px;font-size:10px;line-height:12.00px;color:#222;left:801.20px;width:600px;text-align:center;">Anhänge...</div>
<svg class="i" width="1200" height="710"><path d="M455.00,101.00L457.30,98.80L459.60,101.00M455.00,103.40L457.30,105.60L459.60,103.40" fill="none" stroke="#fff" stroke-width="1.1" stroke-linecap="round" stroke-linejoin="round"/><path d="M538.80,101.00L541.10,98.80L543.40,101.00M538.80,103.40L541.10,105.60L543.40,103.40" fill="none" stroke="#fff" stroke-width="1.1" stroke-linecap="round" stroke-linejoin="round"/><path d="M624.10,101.00L626.40,98.80L628.70,101.00M624.10,103.40L626.40,105.60L628.70,103.40" fill="none" stroke="#fff" stroke-width="1.1" stroke-linecap="round" stroke-linejoin="round"/><path d="M654.3,98.9L650.8,102.15L654.3,105.4M667.5,98.9L671,102.15L667.5,105.4" fill="none" stroke="#333" stroke-width="1.2" stroke-linecap="round" stroke-linejoin="round"/><circle cx="1013.2" cy="101.9" r="3.1" fill="none" stroke="#333" stroke-width="1.2"/><path d="M1015.5,104.2L1018,106.7" stroke="#333" stroke-width="1.3" stroke-linecap="round"/><path d="M333.00,144.05L335.40,146.45L337.80,144.05" fill="none" stroke="#c9c9c9" stroke-width="0.9" stroke-linecap="round" stroke-linejoin="round"/><path d="M363.51,142.17L364.08,140.35L365.52,140.35L366.09,142.17A3.2,3.2 0 0 1 365.96,142.12L365.96,142.12L367.64,141.23L368.67,142.26L367.78,143.94A3.2,3.2 0 0 1 367.73,143.81L367.73,143.81L369.55,144.38L369.55,145.82L367.73,146.39A3.2,3.2 0 0 1 367.78,146.26L367.78,146.26L368.67,147.94L367.64,148.97L365.96,148.08A3.2,3.2 0 0 1 366.09,148.03L366.09,148.03L365.52,149.85L364.08,149.85L363.51,148.03A3.2,3.2 0 0 1 363.64,148.08L363.64,148.08L361.96,148.97L360.93,147.94L361.82,146.26A3.2,3.2 0 0 1 361.87,146.39L361.87,146.39L360.05,145.82L360.05,144.38L361.87,143.81A3.2,3.2 0 0 1 361.82,143.94L361.82,143.94L360.93,142.26L361.96,141.23L363.64,142.12A3.2,3.2 0 0 1 363.51,142.17ZM366.30,145.10A1.5,1.5 0 1 0 363.30,145.10A1.5,1.5 0 1 0 366.30,145.10Z" fill="#3a3a3a" fill-rule="evenodd" stroke="#3a3a3a" stroke-width="0.5" stroke-linejoin="round"/><path d="M371.4,147.6H375L373.2,149.5Z" fill="#333"/><path d="M940.55,143.40L944.15,147.10L947.75,143.40" fill="none" stroke="#333" stroke-width="1.6" stroke-linecap="round" stroke-linejoin="round"/><path d="M1048.10,143.40L1051.70,147.10L1055.30,143.40" fill="none" stroke="#333" stroke-width="1.6" stroke-linecap="round" stroke-linejoin="round"/><path d="M454.20,179.45L456.60,181.85L459.00,179.45" fill="none" stroke="#c9c9c9" stroke-width="0.9" stroke-linecap="round" stroke-linejoin="round"/><path d="M532.15,200.70L534.45,198.50L536.75,200.70M532.15,203.10L534.45,205.30L536.75,203.10" fill="none" stroke="#fff" stroke-width="1.1" stroke-linecap="round" stroke-linejoin="round"/><path d="M370.90,219.95L374.50,223.65L378.10,219.95" fill="none" stroke="#333" stroke-width="1.6" stroke-linecap="round" stroke-linejoin="round"/><g fill="#333"><circle cx="393.6" cy="221.7" r="1.8"/><circle cx="399.4" cy="218.6" r="1.6"/><circle cx="399.4" cy="224.8" r="1.6"/></g><path d="M393.6,221.7L399.4,218.6M393.6,221.7L399.4,224.8" stroke="#333" stroke-width="1.1"/><path d="M383.2,241.2L385.7,238.6L388.2,241.2ZM383.2,244.2L385.7,246.8L388.2,244.2Z" fill="#333" stroke="#333" stroke-width="0.5" stroke-linejoin="round"/><path d="M395.85,262.30L398.45,264.90L401.05,262.30" fill="none" stroke="#fff" stroke-width="1.2" stroke-linecap="round" stroke-linejoin="round"/><path d="M395.50,282.65L397.90,285.05L400.30,282.65" fill="none" stroke="#c9c9c9" stroke-width="0.9" stroke-linecap="round" stroke-linejoin="round"/><path d="M395.50,303.10L397.90,305.50L400.30,303.10" fill="none" stroke="#c9c9c9" stroke-width="0.9" stroke-linecap="round" stroke-linejoin="round"/></svg>
<div class="b" style="left:212.00px;top:356.80px;width:947.00px;height:1.40px;background:#dedede"></div>
<div class="b" style="left:212.00px;top:358.20px;width:947.00px;height:16.30px;background:#f6f6f6"></div>
<div class="b" style="left:212.00px;top:374.00px;width:947.00px;height:0.60px;background:#e6e6e6"></div>
<div class="b" style="left:212.00px;top:374.50px;width:936.00px;height:263.90px;background:#fff"></div>
<div class="b" style="left:212.00px;top:390.30px;width:936.00px;height:15.50px;background:#f4f5f5"></div>
<div class="b" style="left:212.00px;top:421.30px;width:936.00px;height:15.50px;background:#f4f5f5"></div>
<div class="b" style="left:212.00px;top:452.30px;width:936.00px;height:15.50px;background:#f4f5f5"></div>
<div class="b" style="left:212.00px;top:483.30px;width:936.00px;height:15.50px;background:#f4f5f5"></div>
<div class="b" style="left:212.00px;top:514.30px;width:936.00px;height:15.50px;background:#f4f5f5"></div>
<div class="b" style="left:212.00px;top:545.30px;width:936.00px;height:15.50px;background:#f4f5f5"></div>
<div class="b" style="left:212.00px;top:576.30px;width:936.00px;height:15.50px;background:#f4f5f5"></div>
<div class="b" style="left:212.00px;top:591.80px;width:936.00px;height:15.50px;background:#2a5dd5"></div>
<div class="b" style="left:212.00px;top:607.30px;width:936.00px;height:15.50px;background:#f4f5f5"></div>
<div class="b" style="left:215.00px;top:377.50px;width:15.80px;height:11.30px;background:#fff;border-radius:1px;box-shadow:inset 0 0 0 0.8px #f0a54a"></div>
<div class="b" style="left:215.00px;top:377.50px;width:3.50px;height:11.30px;background:#f0a54a;border-radius:1px 0 0 1px"></div>
<div class="a" style="top:378.14px;font-size:9.1px;line-height:10.92px;color:#222;left:-75.20px;width:600px;text-align:center;">E</div>
<div class="a" style="top:378.14px;font-size:9.1px;line-height:10.92px;color:#222;left:274.30px;">01.01.2026</div>
<div class="a" style="top:378.14px;font-size:9.1px;line-height:10.92px;color:#222;left:333.20px;">9</div>
<div class="a" style="top:378.14px;font-size:9.1px;line-height:10.92px;color:#222;left:421.60px;">EB-Wert</div>
<div class="a" style="top:378.14px;font-size:9.1px;line-height:10.92px;color:#222;right:458.70px;text-align:right;">9000</div>
<div class="a" style="top:378.14px;font-size:9.1px;line-height:10.92px;color:#222;right:414.10px;text-align:right;">2039</div>
<div class="a" style="top:378.14px;font-size:9.1px;line-height:10.92px;color:#222;right:333.30px;text-align:right;">243’234.00</div>
<div class="a" style="top:378.14px;font-size:9.1px;line-height:10.92px;color:#222;left:628.00px;width:600px;text-align:center;">-</div>
<div class="b" style="left:215.00px;top:393.00px;width:15.80px;height:11.30px;background:#fff;border-radius:1px;box-shadow:inset 0 0 0 0.8px #f0a54a"></div>
<div class="b" style="left:215.00px;top:393.00px;width:3.50px;height:11.30px;background:#f0a54a;border-radius:1px 0 0 1px"></div>
<div class="a" style="top:393.64px;font-size:9.1px;line-height:10.92px;color:#222;left:-75.20px;width:600px;text-align:center;">E</div>
<div class="a" style="top:393.64px;font-size:9.1px;line-height:10.92px;color:#222;left:274.30px;">01.01.2026</div>
<div class="a" style="top:393.64px;font-size:9.1px;line-height:10.92px;color:#222;left:333.20px;">10</div>
<div class="a" style="top:393.64px;font-size:9.1px;line-height:10.92px;color:#222;left:421.60px;">EB-Wert</div>
<div class="a" style="top:393.64px;font-size:9.1px;line-height:10.92px;color:#222;right:458.70px;text-align:right;">9000</div>
<div class="a" style="top:393.64px;font-size:9.1px;line-height:10.92px;color:#222;right:414.10px;text-align:right;">2301</div>
<div class="a" style="top:393.64px;font-size:9.1px;line-height:10.92px;color:#222;right:333.30px;text-align:right;">4’588.61</div>
<div class="a" style="top:393.64px;font-size:9.1px;line-height:10.92px;color:#222;left:628.00px;width:600px;text-align:center;">-</div>
<div class="b" style="left:215.00px;top:408.50px;width:15.80px;height:11.30px;background:#fff;border-radius:1px;box-shadow:inset 0 0 0 0.8px #f0a54a"></div>
<div class="b" style="left:215.00px;top:408.50px;width:3.50px;height:11.30px;background:#f0a54a;border-radius:1px 0 0 1px"></div>
<div class="a" style="top:409.14px;font-size:9.1px;line-height:10.92px;color:#222;left:-75.20px;width:600px;text-align:center;">E</div>
<div class="a" style="top:409.14px;font-size:9.1px;line-height:10.92px;color:#222;left:274.30px;">01.01.2026</div>
<div class="a" style="top:409.14px;font-size:9.1px;line-height:10.92px;color:#222;left:333.20px;">11</div>
<div class="a" style="top:409.14px;font-size:9.1px;line-height:10.92px;color:#222;left:421.60px;">EB-Wert</div>
<div class="a" style="top:409.14px;font-size:9.1px;line-height:10.92px;color:#222;right:458.70px;text-align:right;">10003</div>
<div class="a" style="top:409.14px;font-size:9.1px;line-height:10.92px;color:#222;right:414.10px;text-align:right;">9908</div>
<div class="a" style="top:409.14px;font-size:9.1px;line-height:10.92px;color:#222;right:333.30px;text-align:right;">455’067.70</div>
<div class="a" style="top:409.14px;font-size:9.1px;line-height:10.92px;color:#222;left:628.00px;width:600px;text-align:center;">-</div>
<div class="b" style="left:215.00px;top:424.00px;width:15.80px;height:11.30px;background:#fff;border-radius:1px;box-shadow:inset 0 0 0 0.8px #f0a54a"></div>
<div class="b" style="left:215.00px;top:424.00px;width:3.50px;height:11.30px;background:#f0a54a;border-radius:1px 0 0 1px"></div>
<div class="a" style="top:424.64px;font-size:9.1px;line-height:10.92px;color:#222;left:-75.20px;width:600px;text-align:center;">E</div>
<div class="a" style="top:424.64px;font-size:9.1px;line-height:10.92px;color:#222;left:274.30px;">01.01.2026</div>
<div class="a" style="top:424.64px;font-size:9.1px;line-height:10.92px;color:#222;left:333.20px;">12</div>
<div class="a" style="top:424.64px;font-size:9.1px;line-height:10.92px;color:#222;left:421.60px;">EB-Wert</div>
<div class="a" style="top:424.64px;font-size:9.1px;line-height:10.92px;color:#222;right:458.70px;text-align:right;">10004</div>
<div class="a" style="top:424.64px;font-size:9.1px;line-height:10.92px;color:#222;right:414.10px;text-align:right;">9908</div>
<div class="a" style="top:424.64px;font-size:9.1px;line-height:10.92px;color:#222;right:333.30px;text-align:right;">15’790.68</div>
<div class="a" style="top:424.64px;font-size:9.1px;line-height:10.92px;color:#222;left:628.00px;width:600px;text-align:center;">-</div>
<div class="b" style="left:215.00px;top:439.50px;width:15.80px;height:11.30px;background:#fff;border-radius:1px;box-shadow:inset 0 0 0 0.8px #f0a54a"></div>
<div class="b" style="left:215.00px;top:439.50px;width:3.50px;height:11.30px;background:#f0a54a;border-radius:1px 0 0 1px"></div>
<div class="a" style="top:440.14px;font-size:9.1px;line-height:10.92px;color:#222;left:-75.20px;width:600px;text-align:center;">E</div>
<div class="a" style="top:440.14px;font-size:9.1px;line-height:10.92px;color:#222;left:274.30px;">01.01.2026</div>
<div class="a" style="top:440.14px;font-size:9.1px;line-height:10.92px;color:#222;left:333.20px;">13</div>
<div class="a" style="top:440.14px;font-size:9.1px;line-height:10.92px;color:#222;left:421.60px;">EB-Wert</div>
<div class="a" style="top:440.14px;font-size:9.1px;line-height:10.92px;color:#222;right:458.70px;text-align:right;">10005</div>
<div class="a" style="top:440.14px;font-size:9.1px;line-height:10.92px;color:#222;right:414.10px;text-align:right;">9908</div>
<div class="a" style="top:440.14px;font-size:9.1px;line-height:10.92px;color:#222;right:333.30px;text-align:right;">2’001.60</div>
<div class="a" style="top:440.14px;font-size:9.1px;line-height:10.92px;color:#222;left:628.00px;width:600px;text-align:center;">-</div>
<div class="b" style="left:215.00px;top:455.00px;width:15.80px;height:11.30px;background:#fff;border-radius:1px;box-shadow:inset 0 0 0 0.8px #f0a54a"></div>
<div class="b" style="left:215.00px;top:455.00px;width:3.50px;height:11.30px;background:#f0a54a;border-radius:1px 0 0 1px"></div>
<div class="a" style="top:455.64px;font-size:9.1px;line-height:10.92px;color:#222;left:-75.20px;width:600px;text-align:center;">E</div>
<div class="a" style="top:455.64px;font-size:9.1px;line-height:10.92px;color:#222;left:274.30px;">01.01.2026</div>
<div class="a" style="top:455.64px;font-size:9.1px;line-height:10.92px;color:#222;left:333.20px;">14</div>
<div class="a" style="top:455.64px;font-size:9.1px;line-height:10.92px;color:#222;left:421.60px;">EB-Wert</div>
<div class="a" style="top:455.64px;font-size:9.1px;line-height:10.92px;color:#222;right:458.70px;text-align:right;">10006</div>
<div class="a" style="top:455.64px;font-size:9.1px;line-height:10.92px;color:#222;right:414.10px;text-align:right;">9908</div>
<div class="a" style="top:455.64px;font-size:9.1px;line-height:10.92px;color:#222;right:333.30px;text-align:right;">556.00</div>
<div class="a" style="top:455.64px;font-size:9.1px;line-height:10.92px;color:#222;left:628.00px;width:600px;text-align:center;">-</div>
<div class="b" style="left:215.00px;top:470.50px;width:15.80px;height:11.30px;background:#fff;border-radius:1px;box-shadow:inset 0 0 0 0.8px #f0a54a"></div>
<div class="b" style="left:215.00px;top:470.50px;width:3.50px;height:11.30px;background:#f0a54a;border-radius:1px 0 0 1px"></div>
<div class="a" style="top:471.14px;font-size:9.1px;line-height:10.92px;color:#222;left:-75.20px;width:600px;text-align:center;">E</div>
<div class="a" style="top:471.14px;font-size:9.1px;line-height:10.92px;color:#222;left:274.30px;">01.01.2026</div>
<div class="a" style="top:471.14px;font-size:9.1px;line-height:10.92px;color:#222;left:333.20px;">15</div>
<div class="a" style="top:471.14px;font-size:9.1px;line-height:10.92px;color:#222;left:421.60px;">EB-Wert</div>
<div class="a" style="top:471.14px;font-size:9.1px;line-height:10.92px;color:#222;right:458.70px;text-align:right;">9909</div>
<div class="a" style="top:471.14px;font-size:9.1px;line-height:10.92px;color:#222;right:414.10px;text-align:right;">70002</div>
<div class="a" style="top:471.14px;font-size:9.1px;line-height:10.92px;color:#222;right:333.30px;text-align:right;">22’157.64</div>
<div class="a" style="top:471.14px;font-size:9.1px;line-height:10.92px;color:#222;left:628.00px;width:600px;text-align:center;">-</div>
<div class="b" style="left:215.00px;top:486.00px;width:15.80px;height:11.30px;background:#fff;border-radius:1px;box-shadow:inset 0 0 0 0.8px #f0a54a"></div>
<div class="b" style="left:215.00px;top:486.00px;width:3.50px;height:11.30px;background:#f0a54a;border-radius:1px 0 0 1px"></div>
<div class="a" style="top:486.64px;font-size:9.1px;line-height:10.92px;color:#222;left:-75.20px;width:600px;text-align:center;">E</div>
<div class="a" style="top:486.64px;font-size:9.1px;line-height:10.92px;color:#222;left:274.30px;">01.01.2026</div>
<div class="a" style="top:486.64px;font-size:9.1px;line-height:10.92px;color:#222;left:333.20px;">16</div>
<div class="a" style="top:486.64px;font-size:9.1px;line-height:10.92px;color:#222;left:421.60px;">Bilanzgewinn 2025</div>
<div class="a" style="top:486.64px;font-size:9.1px;line-height:10.92px;color:#222;right:458.70px;text-align:right;">9000</div>
<div class="a" style="top:486.64px;font-size:9.1px;line-height:10.92px;color:#222;right:414.10px;text-align:right;">2970</div>
<div class="a" style="top:486.64px;font-size:9.1px;line-height:10.92px;color:#222;right:333.30px;text-align:right;">528’822.92</div>
<div class="a" style="top:486.64px;font-size:9.1px;line-height:10.92px;color:#222;left:628.00px;width:600px;text-align:center;">-</div>
<div class="b" style="left:215.00px;top:501.50px;width:15.80px;height:11.30px;background:#fff;border-radius:1px;box-shadow:inset 0 0 0 0.8px #f0a54a"></div>
<div class="b" style="left:215.00px;top:501.50px;width:3.50px;height:11.30px;background:#f0a54a;border-radius:1px 0 0 1px"></div>
<div class="a" style="top:502.14px;font-size:9.1px;line-height:10.92px;color:#222;left:-75.20px;width:600px;text-align:center;">E</div>
<div class="a" style="top:502.14px;font-size:9.1px;line-height:10.92px;color:#222;left:274.30px;">01.01.2026</div>
<div class="a" style="top:502.14px;font-size:9.1px;line-height:10.92px;color:#222;left:333.20px;">17</div>
<div class="a" style="top:502.14px;font-size:9.1px;line-height:10.92px;color:#222;left:421.60px;">Umsatzsteuerverbindlichkeit 2025</div>
<div class="a" style="top:502.14px;font-size:9.1px;line-height:10.92px;color:#222;right:458.70px;text-align:right;">9000</div>
<div class="a" style="top:502.14px;font-size:9.1px;line-height:10.92px;color:#222;right:414.10px;text-align:right;">2201</div>
<div class="a" style="top:502.14px;font-size:9.1px;line-height:10.92px;color:#222;right:333.30px;text-align:right;">44’113.52</div>
<div class="a" style="top:502.14px;font-size:9.1px;line-height:10.92px;color:#222;left:628.00px;width:600px;text-align:center;">-</div>
<div class="b" style="left:215.00px;top:517.00px;width:15.80px;height:11.30px;background:#fff;border-radius:1px;box-shadow:inset 0 0 0 0.8px #f0a54a"></div>
<div class="b" style="left:215.00px;top:517.00px;width:3.50px;height:11.30px;background:#f0a54a;border-radius:1px 0 0 1px"></div>
<div class="a" style="top:517.64px;font-size:9.1px;line-height:10.92px;color:#222;left:-75.20px;width:600px;text-align:center;">E</div>
<div class="a" style="top:517.64px;font-size:9.1px;line-height:10.92px;color:#222;left:274.30px;">01.01.2026</div>
<div class="a" style="top:517.64px;font-size:9.1px;line-height:10.92px;color:#222;left:333.20px;">18</div>
<div class="a" style="top:517.64px;font-size:9.1px;line-height:10.92px;color:#222;left:421.60px;">Privatkontenvortrag 2025</div>
<div class="a" style="top:517.64px;font-size:9.1px;line-height:10.92px;color:#222;right:458.70px;text-align:right;">9000</div>
<div class="a" style="top:517.64px;font-size:9.1px;line-height:10.92px;color:#222;right:414.10px;text-align:right;">2800</div>
<div class="a" style="top:517.64px;font-size:9.1px;line-height:10.92px;color:#222;right:333.30px;text-align:right;">185’358.01</div>
<div class="a" style="top:517.64px;font-size:9.1px;line-height:10.92px;color:#222;left:628.00px;width:600px;text-align:center;">-</div>
<div class="b" style="left:215.00px;top:532.50px;width:15.80px;height:11.30px;background:#fff;border-radius:1px;box-shadow:inset 0 0 0 0.8px #9b9b9b"></div>
<div class="b" style="left:215.00px;top:532.50px;width:3.50px;height:11.30px;background:#9b9b9b;border-radius:1px 0 0 1px"></div>
<div class="a" style="top:533.14px;font-size:9.1px;line-height:10.92px;color:#222;left:-75.20px;width:600px;text-align:center;">M</div>
<div class="a" style="top:533.14px;font-size:9.1px;line-height:10.92px;color:#222;left:274.30px;">15.01.2026</div>
<div class="a" style="top:533.14px;font-size:9.1px;line-height:10.92px;color:#222;left:333.20px;">19</div>
<div class="a" style="top:533.14px;font-size:9.1px;line-height:10.92px;color:#222;left:421.60px;">RG 5679</div>
<div class="a" style="top:533.14px;font-size:9.1px;line-height:10.92px;color:#222;right:458.70px;text-align:right;">1020</div>
<div class="a" style="top:533.14px;font-size:9.1px;line-height:10.92px;color:#222;right:414.10px;text-align:right;">3000</div>
<div class="b" style="left:792.80px;top:532.20px;width:3.20px;height:10.80px;background:#5ccb57"></div>
<div class="a" style="top:533.14px;font-size:9.1px;line-height:10.92px;color:#222;right:333.30px;text-align:right;">14’244.00</div>
<div class="a" style="top:533.14px;font-size:9.1px;line-height:10.92px;color:#222;left:628.00px;width:600px;text-align:center;">U8.1B</div>
<div class="b" style="left:215.00px;top:548.00px;width:15.80px;height:11.30px;background:#fff;border-radius:1px;box-shadow:inset 0 0 0 0.8px #c98ee0"></div>
<div class="b" style="left:215.00px;top:548.00px;width:3.50px;height:11.30px;background:#c98ee0;border-radius:1px 0 0 1px"></div>
<div class="a" style="top:548.64px;font-size:9.1px;line-height:10.92px;color:#222;left:-75.20px;width:600px;text-align:center;">K</div>
<div class="a" style="top:548.64px;font-size:9.1px;line-height:10.92px;color:#222;left:274.30px;">15.01.2026</div>
<div class="a" style="top:548.64px;font-size:9.1px;line-height:10.92px;color:#222;left:333.20px;">ER-2026-1013</div>
<div class="a" style="top:548.64px;font-size:9.1px;line-height:10.92px;color:#222;left:421.60px;">Einkauf Nr.: ER-2026-1013, BIKEANDMORE</div>
<div class="a" style="top:548.64px;font-size:9.1px;line-height:10.92px;color:#222;right:458.70px;text-align:right;">4000</div>
<div class="a" style="top:548.64px;font-size:9.1px;line-height:10.92px;color:#222;right:414.10px;text-align:right;">70002</div>
<div class="a" style="top:548.64px;font-size:9.1px;line-height:10.92px;color:#222;right:333.30px;text-align:right;">2’468.30</div>
<div class="a" style="top:548.64px;font-size:9.1px;line-height:10.92px;color:#222;left:628.00px;width:600px;text-align:center;">VM8.1B</div>
<div class="b" style="left:215.00px;top:563.50px;width:15.80px;height:11.30px;background:#fff;border-radius:1px;box-shadow:inset 0 0 0 0.8px #5ccb57"></div>
<div class="b" style="left:215.00px;top:563.50px;width:3.50px;height:11.30px;background:#5ccb57;border-radius:1px 0 0 1px"></div>
<div class="a" style="top:564.14px;font-size:9.1px;line-height:10.92px;color:#222;left:-75.20px;width:600px;text-align:center;">D</div>
<div class="a" style="top:564.14px;font-size:9.1px;line-height:10.92px;color:#222;left:274.30px;">15.01.2026</div>
<div class="a" style="top:564.14px;font-size:9.1px;line-height:10.92px;color:#222;left:333.20px;">R-2026-1063</div>
<div class="a" style="top:564.14px;font-size:9.1px;line-height:10.92px;color:#222;left:421.60px;">Rechnung, ReNr: R-2026-1063, LOEWENZAHN</div>
<div class="a" style="top:564.14px;font-size:9.1px;line-height:10.92px;color:#222;right:458.70px;text-align:right;">10004</div>
<div class="a" style="top:564.14px;font-size:9.1px;line-height:10.92px;color:#222;right:414.10px;text-align:right;">&lt;div&gt;</div>
<div class="a" style="top:564.14px;font-size:9.1px;line-height:10.92px;color:#222;right:333.30px;text-align:right;">1’453.80</div>
<div class="a" style="top:564.14px;font-size:9.1px;line-height:10.92px;color:#222;left:628.00px;width:600px;text-align:center;">&lt;div&gt;</div>
<div class="b" style="left:215.00px;top:579.00px;width:15.80px;height:11.30px;background:#fff;border-radius:1px;box-shadow:inset 0 0 0 0.8px #5ccb57"></div>
<div class="b" style="left:215.00px;top:579.00px;width:3.50px;height:11.30px;background:#5ccb57;border-radius:1px 0 0 1px"></div>
<div class="a" style="top:579.64px;font-size:9.1px;line-height:10.92px;color:#222;left:-75.20px;width:600px;text-align:center;">D</div>
<div class="a" style="top:579.64px;font-size:9.1px;line-height:10.92px;color:#222;left:274.30px;">16.01.2026</div>
<div class="a" style="top:579.64px;font-size:9.1px;line-height:10.92px;color:#222;left:333.20px;">R-2026-1063</div>
<div class="a" style="top:579.64px;font-size:9.1px;line-height:10.92px;color:#222;left:421.60px;">Zahlung, ReNr: R-2026-1063, LOEWENZAHN</div>
<div class="a" style="top:579.64px;font-size:9.1px;line-height:10.92px;color:#222;right:458.70px;text-align:right;">1020</div>
<div class="a" style="top:579.64px;font-size:9.1px;line-height:10.92px;color:#222;right:414.10px;text-align:right;">10004</div>
<div class="b" style="left:792.80px;top:578.70px;width:3.20px;height:10.80px;background:#5ccb57"></div>
<div class="a" style="top:579.64px;font-size:9.1px;line-height:10.92px;color:#222;right:333.30px;text-align:right;">1’453.80</div>
<div class="a" style="top:579.64px;font-size:9.1px;line-height:10.92px;color:#222;left:628.00px;width:600px;text-align:center;">-</div>
<div class="b" style="left:215.00px;top:594.50px;width:15.80px;height:11.30px;background:#fff;border-radius:1px;box-shadow:inset 0 0 0 0.8px #9b9b9b"></div>
<div class="b" style="left:215.00px;top:594.50px;width:3.50px;height:11.30px;background:#9b9b9b;border-radius:1px 0 0 1px"></div>
<div class="a" style="top:595.14px;font-size:9.1px;line-height:10.92px;color:#222;left:-75.20px;width:600px;text-align:center;">M</div>
<div class="a" style="top:595.14px;font-size:9.1px;line-height:10.92px;color:#fff;left:274.30px;">21.01.2026</div>
<div class="a" style="top:595.14px;font-size:9.1px;line-height:10.92px;color:#fff;left:333.20px;">20</div>
<div class="a" style="top:595.14px;font-size:9.1px;line-height:10.92px;color:#fff;left:421.60px;">Anzeige NZZ, FA 4859004</div>
<div class="a" style="top:595.14px;font-size:9.1px;line-height:10.92px;color:#fff;right:458.70px;text-align:right;">6600</div>
<div class="a" style="top:595.14px;font-size:9.1px;line-height:10.92px;color:#fff;right:414.10px;text-align:right;">1000</div>
<div class="b" style="left:792.80px;top:594.20px;width:3.20px;height:10.80px;background:#ea6a5a"></div>
<div class="a" style="top:595.14px;font-size:9.1px;line-height:10.92px;color:#fff;right:333.30px;text-align:right;">820.00</div>
<div class="a" style="top:595.14px;font-size:9.1px;line-height:10.92px;color:#fff;left:628.00px;width:600px;text-align:center;">VS8.1B</div>
<div class="b" style="left:215.00px;top:610.00px;width:15.80px;height:11.30px;background:#fff;border-radius:1px;box-shadow:inset 0 0 0 0.8px #5ccb57"></div>
<div class="b" style="left:215.00px;top:610.00px;width:3.50px;height:11.30px;background:#5ccb57;border-radius:1px 0 0 1px"></div>
<div class="a" style="top:610.64px;font-size:9.1px;line-height:10.92px;color:#222;left:-75.20px;width:600px;text-align:center;">D</div>
<div class="a" style="top:610.64px;font-size:9.1px;line-height:10.92px;color:#222;left:274.30px;">23.02.2026</div>
<div class="a" style="top:610.64px;font-size:9.1px;line-height:10.92px;color:#222;left:333.20px;">R-2026-1064</div>
<div class="a" style="top:610.64px;font-size:9.1px;line-height:10.92px;color:#222;left:421.60px;">Rechnung, ReNr: R-2026-1064, LOEWENZAHN</div>
<div class="a" style="top:610.64px;font-size:9.1px;line-height:10.92px;color:#222;right:458.70px;text-align:right;">10004</div>
<div class="a" style="top:610.64px;font-size:9.1px;line-height:10.92px;color:#222;right:414.10px;text-align:right;">&lt;div&gt;</div>
<div class="a" style="top:610.64px;font-size:9.1px;line-height:10.92px;color:#222;right:333.30px;text-align:right;">1’236.62</div>
<div class="a" style="top:610.64px;font-size:9.1px;line-height:10.92px;color:#222;left:628.00px;width:600px;text-align:center;">&lt;div&gt;</div>
<div class="b" style="left:234.00px;top:374.50px;width:1.00px;height:248.30px;background:#e9e9e9"></div>
<div class="b" style="left:234.00px;top:360.50px;width:1.00px;height:12.00px;background:#e9e9e9"></div>
<div class="b" style="left:252.00px;top:374.50px;width:1.00px;height:248.30px;background:#dcdcdc"></div>
<div class="b" style="left:252.00px;top:360.50px;width:1.00px;height:12.00px;background:#e9e9e9"></div>
<div class="b" style="left:270.00px;top:374.50px;width:1.00px;height:248.30px;background:#dcdcdc"></div>
<div class="b" style="left:270.00px;top:360.50px;width:1.00px;height:12.00px;background:#e9e9e9"></div>
<div class="b" style="left:329.10px;top:374.50px;width:1.00px;height:248.30px;background:#dcdcdc"></div>
<div class="b" style="left:329.10px;top:360.50px;width:1.00px;height:12.00px;background:#e9e9e9"></div>
<div class="b" style="left:417.00px;top:374.50px;width:1.00px;height:248.30px;background:#dcdcdc"></div>
<div class="b" style="left:417.00px;top:360.50px;width:1.00px;height:12.00px;background:#e9e9e9"></div>
<div class="b" style="left:700.80px;top:374.50px;width:1.00px;height:248.30px;background:#dcdcdc"></div>
<div class="b" style="left:700.80px;top:360.50px;width:1.00px;height:12.00px;background:#e9e9e9"></div>
<div class="b" style="left:744.80px;top:374.50px;width:1.00px;height:248.30px;background:#dcdcdc"></div>
<div class="b" style="left:744.80px;top:360.50px;width:1.00px;height:12.00px;background:#e9e9e9"></div>
<div class="b" style="left:788.80px;top:374.50px;width:1.00px;height:248.30px;background:#dcdcdc"></div>
<div class="b" style="left:788.80px;top:360.50px;width:1.00px;height:12.00px;background:#e9e9e9"></div>
<div class="b" style="left:869.60px;top:374.50px;width:1.00px;height:248.30px;background:#dcdcdc"></div>
<div class="b" style="left:869.60px;top:360.50px;width:1.00px;height:12.00px;background:#e9e9e9"></div>
<div class="b" style="left:984.80px;top:360.50px;width:1.00px;height:12.00px;background:#e9e9e9"></div>
<div class="a" style="top:361.90px;font-size:9.3px;line-height:11.16px;color:#333;left:217.20px;">Art</div>
<div class="a" style="top:361.90px;font-size:9.3px;line-height:11.16px;color:#333;left:-55.70px;width:600px;text-align:center;">F</div>
<div class="a" style="top:361.90px;font-size:9.3px;line-height:11.16px;color:#333;left:274.50px;">Datum</div>
<div class="a" style="top:361.90px;font-size:9.3px;line-height:11.16px;color:#333;left:333.60px;">Beleg-Nr</div>
<div class="a" style="top:361.90px;font-size:9.3px;line-height:11.16px;color:#333;left:422.00px;">Text</div>
<div class="a" style="top:361.90px;font-size:9.3px;line-height:11.16px;color:#333;right:458.70px;text-align:right;">Soll</div>
<div class="a" style="top:361.90px;font-size:9.3px;line-height:11.16px;color:#333;right:414.10px;text-align:right;">Haben</div>
<div class="a" style="top:361.90px;font-size:9.3px;line-height:11.16px;color:#333;right:333.30px;text-align:right;">Betrag CHF</div>
<div class="a" style="top:361.90px;font-size:9.3px;line-height:11.16px;color:#333;left:628.00px;width:600px;text-align:center;">Steuer</div>
<div class="b" style="left:1147.90px;top:374.50px;width:11.10px;height:263.90px;background:#fafafa"></div>
<div class="b" style="left:1147.90px;top:374.50px;width:0.60px;height:263.90px;background:#ececec"></div>
<div class="b" style="left:1150.60px;top:467.60px;width:5.80px;height:167.40px;background:#7f7f7f;border-radius:3px"></div>
<svg class="i" width="1200" height="710"><g fill="none" stroke="#444" stroke-width="0.9"><circle cx="259.6" cy="364.3" r="1.9"/><circle cx="263.6" cy="368.1" r="1.9"/><path d="M260.9,365.6L262.3,366.8"/></g></svg>
<div class="b" style="left:212.00px;top:638.00px;width:947.00px;height:18.00px;background:#f6f6f6"></div>
<div class="b" style="left:212.00px;top:638.00px;width:947.00px;height:1.00px;background:#d8d8d8"></div>
<div class="a" style="top:641.59px;font-size:9.2px;line-height:11.04px;color:#333;left:384.50px;width:600px;text-align:center;">1 von 24 ausgewählt</div>
</div></body></html>
